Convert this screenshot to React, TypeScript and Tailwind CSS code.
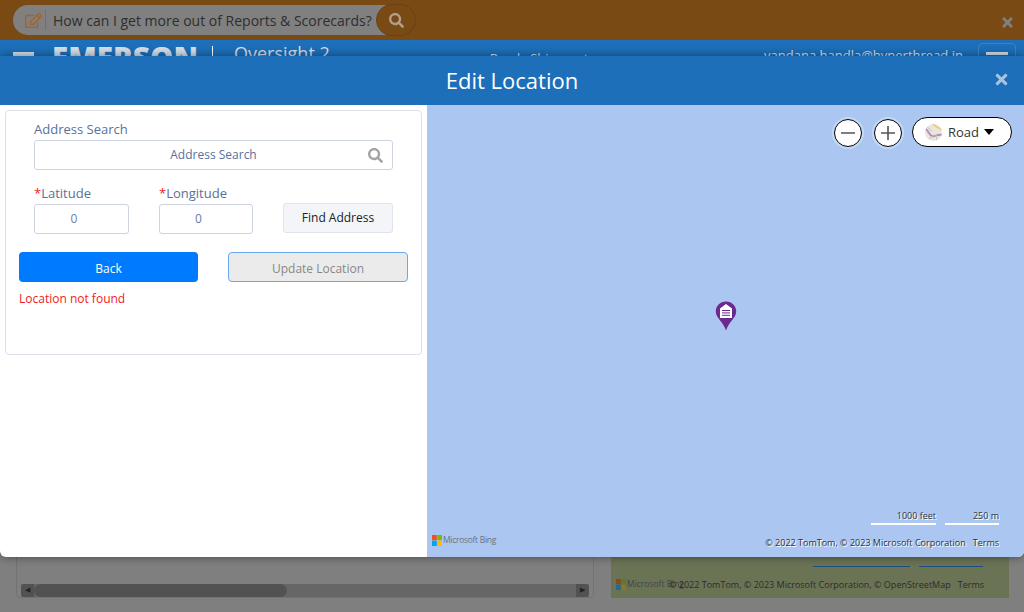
import { FaSearch, FaTimes, FaRegEdit } from 'react-icons/fa'

const font = { fontFamily: '"Open Sans", sans-serif' }

function PageBehind() {
  return (
    <div className="flex h-full flex-col">
      <div className="flex h-10 shrink-0 items-center justify-between bg-[#7a4a15] pl-[13px] pr-[9px]">
        <div className="flex items-center">
          <div className="flex h-[30px] w-[375px] items-center rounded-l-full bg-[#808080] pl-[12px]">
            <FaRegEdit size={17} className="shrink-0 text-[#a5622a]" />
            <div className="ml-[3px] h-5 w-px bg-[#a5622a]" />
            <span className="ml-[7px] whitespace-nowrap text-[14px] text-[#2e2e2e]">How can I get more out of Reports &amp; Scorecards?</span>
          </div>
          <div className="-ml-[12px] flex h-8 w-10 items-center justify-center rounded-full border border-[#6a4013] bg-[#7a4a15]">
            <FaSearch size={15} className="text-[#b09f8c]" />
          </div>
        </div>
        <FaTimes size={15} className="mt-[5px] text-[#808080]" />
      </div>

      <div className="flex h-6 shrink-0 items-start overflow-hidden bg-[#1c6fb8] pl-[13px] pr-[8px] text-[#d4dee8]">
        <div className="mt-[12px] h-[4px] w-[21px] shrink-0 bg-[#d4dee8]" />
        <span className="ml-[18px] mt-[-2px] text-[29.500px] font-extrabold leading-[40px]">EMERSON</span>
        <div className="ml-[14px] mt-[6px] h-6 w-px bg-white" />
        <span className="ml-[21px] mt-[1px] text-[18px] leading-6">Oversight 2</span>
        <span className="ml-[160px] mt-[10px] text-[13px] leading-4">Ready Shipment</span>
        <span className="ml-auto mt-[5px] text-[13px] leading-5">vandana.handla@hyperthread.in</span>
        <div className="ml-[15px] mt-[3px] flex h-10 w-[38px] justify-center rounded border border-[#3b83c4]">
          <div className="mt-[8px] h-[3px] w-[22px] bg-[#d4dee8]" />
        </div>
      </div>

      <div className="flex min-h-0 flex-1 gap-[17px] pl-[16px] pr-[15px] pb-[14px]">
        <div className="flex w-[578px] flex-col justify-end rounded border border-[#737373] px-[4px]">
          <div className="flex h-[13px] items-center bg-[#666666]">
            <div className="flex h-full w-[13px] items-center justify-center rounded-l bg-[#525252] text-[7px] text-[#222]">◀</div>
            <div className="h-full w-[253px] rounded-full bg-[#525252]" />
            <div className="ml-auto flex h-full w-[13px] items-center justify-center rounded-r bg-[#525252] text-[7px] text-[#222]">▶</div>
          </div>
        </div>
        <div className="flex w-[398px] flex-col justify-end bg-[#6b7355] pb-[7px] text-[9px] text-[#2c2c2c]">
          <div className="flex justify-end gap-[9px] pr-[26px]">
            <div className="h-px w-[97px] bg-[#1c4f80]" />
            <div className="h-px w-[64px] bg-[#1c4f80]" />
          </div>
          <div className="relative mt-[10px] flex h-[14px] items-center pl-[5px]">
            <MsLogo dim />
            <span className="ml-[1px] text-[8.500px] text-[#444]">Microsoft Bing</span>
            <div className="absolute right-[25px] top-[1px] flex gap-[7px] whitespace-nowrap text-[#2c2c2c]">
              <span>© 2022 TomTom, © 2023 Microsoft Corporation, © OpenStreetMap</span>
              <span>Terms</span>
            </div>
          </div>
        </div>
      </div>
    </div>
  )
}

function MsLogo({ dim = false }: { dim?: boolean }) {
  const c = dim ? ['#8a4a20', '#5f7a20', '#1f6a96', '#94761c'] : ['#f25022', '#7fba00', '#00a4ef', '#ffb900']
  return (
    <svg width="10" height="11" viewBox="0 0 10 11">
      <rect width="4.8" height="5.300" fill={c[0]} />
      <rect x="5.2" width="4.8" height="5.300" fill={c[1]} />
      <rect y="5.700" width="4.8" height="5.300" fill={c[2]} />
      <rect x="5.2" y="5.700" width="4.8" height="5.300" fill={c[3]} />
    </svg>
  )
}

function LocationForm() {
  return (
    <div className="w-[427px] shrink-0 pl-[5px] pr-[5px] pt-[5px]">
      <div className="h-[245px] rounded border border-[#dcdfeb] pl-[13px] pr-[13px]">
        <div className="pl-[15px] pr-[15px]">
          <label className="block pt-[9px] text-[13px] leading-[18px] text-[#5a6f9c]">Address Search</label>
          <div className="relative mt-[2px] flex h-[30px] w-[359px] items-center justify-center rounded-[3px] border border-[#ced3e0] text-[12px] text-[#5a6f9c]">
            Address Search
            <FaSearch size={15} className="absolute right-[9px] top-[7px] text-[#a3a3a3]" />
          </div>
          <div className="mt-[13px] flex w-[359px] items-end">
            <div className="w-[95px]">
              <label className="block pb-[1px] text-[13px] leading-[20px] text-[#5a6f9c]"><span className="text-[#f01c1c]">*</span>Latitude</label>
              <div className="flex h-[30px] items-center justify-center rounded-[3px] border border-[#ced3e0] pr-[15px] text-[12px] text-[#6a7da6]">0</div>
            </div>
            <div className="ml-[30px] w-[94px]">
              <label className="block pb-[1px] text-[13px] leading-[20px] text-[#5a6f9c]"><span className="text-[#f01c1c]">*</span>Longitude</label>
              <div className="flex h-[30px] items-center justify-center rounded-[3px] border border-[#ced3e0] pr-[15px] text-[12px] text-[#6a7da6]">0</div>
            </div>
            <button className="mb-[1px] ml-[30px] h-[30px] w-[110px] rounded-[3px] border border-[#e1e3ec] bg-[#f4f5f9] text-[12px] text-[#222]">Find Address</button>
          </div>
        </div>
        <div className="mt-[18px] flex justify-between">
          <button className="h-[30px] w-[179px] rounded-[4px] bg-[#007bff] pt-[3px] text-[12px] text-white">Back</button>
          <button className="h-[30px] w-[180px] rounded-[4px] border border-[#69a8ee] bg-[#ebebeb] pt-[3px] text-[12px] text-[#888]">Update Location</button>
        </div>
        <p className="mt-[8px] text-[12px] leading-[17px] text-[#f01c1c]">Location not found</p>
      </div>
    </div>
  )
}

function MapPane() {
  return (
    <div className="relative flex-1 bg-[#abc7f1]">
      <div className="absolute right-[12px] top-[12px] flex items-center">
        <button className="mt-[2px] flex h-7 w-7 items-center justify-center rounded-full border border-black bg-white ring-2 ring-white/30">
          <svg width="18" height="18" viewBox="0 0 18 18"><path d="M2 9h14" stroke="#555" strokeWidth="1.6" /></svg>
        </button>
        <button className="ml-[12px] mt-[2px] flex h-7 w-7 items-center justify-center rounded-full border border-black bg-white ring-2 ring-white/30">
          <svg width="18" height="18" viewBox="0 0 18 18"><path d="M2 9h14M9 2v14" stroke="#555" strokeWidth="1.6" /></svg>
        </button>
        <button className="ml-[10px] flex h-[30px] w-[100px] items-center rounded-full border border-black bg-white pl-[12px] pt-[2px] text-[13px] text-[#333]">
          <svg className="-mt-[2px]" width="17" height="17" viewBox="0 0 17 17">
            <clipPath id="globe"><circle cx="8.5" cy="8.5" r="8.500" /></clipPath>
            <g clipPath="url(#globe)">
              <rect width="17" height="17" fill="#ebe6da" />
              <path d="M0 5c3 0 4 6 7 7s5-2 10-1" stroke="#b48fcf" strokeWidth="2" fill="none" />
              <path d="M8 0c1 2 5 3 9 6" stroke="#efc57d" strokeWidth="1.6" fill="none" />
              <path d="M4 15l4-3M11 11l1 6M2 3l5 4" stroke="#c9c3b4" strokeWidth="1" fill="none" />
            </g>
          </svg>
          <span className="ml-[6px]">Road</span>
          <svg className="-mt-[2px] ml-[5px]" width="10" height="6" viewBox="0 0 10 6"><path d="M0 0h10L5 6z" fill="#000" /></svg>
        </button>
      </div>

      <svg className="absolute left-[288px] top-[196px]" width="22" height="30" viewBox="0 0 22 30">
        <path d="M11 0.5C5 0.5 0.8 5 0.8 10.5c0 6.500 7 9.500 10.200 19 3.200-9.500 10.200-12.500 10.200-19C21.200 5 17 0.500 11 0.500z" fill="#6b2a8e" />
        <path d="M11 3l6 4.500v9.500h-12v-9.500z" fill="#fff" />
        <path d="M7 9.500h8M7 11.900h8M7 14.300h8" stroke="#6b2a8e" strokeWidth="1" />
      </svg>

      <div className="absolute bottom-[32px] right-[25px] flex gap-[9px] text-[9px] leading-[14px] text-[#333] [text-shadow:1px_1px_0_#fff]">
        <div className="w-[65px] border-b-2 border-white text-right">1000 feet</div>
        <div className="w-[54px] border-b-2 border-white text-right">250 m</div>
      </div>

      <div className="absolute bottom-[10px] left-[5px] flex items-center">
        <MsLogo />
        <span className="ml-[1px] text-[8.500px] tracking-[-0.300px] text-[#6b7280]">Microsoft Bing</span>
      </div>

      <div className="absolute bottom-[8px] right-[25px] flex gap-[7px] whitespace-nowrap text-[9px] text-[#333] [text-shadow:1px_1px_0_#fff]">
        <span>© 2022 TomTom, © 2023 Microsoft Corporation</span>
        <span>Terms</span>
      </div>
    </div>
  )
}

export default function App() {
  return (
    <div className="relative h-[612px] w-[1024px] overflow-hidden bg-[#7f7f7f]" style={font}>
      <PageBehind />

      <div className="absolute inset-x-0 top-[56px] flex h-[501px] flex-col overflow-hidden rounded-b-md bg-white shadow-[0_0_10px_rgba(0,0,0,0.45)]">
        <div className="relative flex h-[49px] shrink-0 items-center justify-center bg-[#1c6fb8]">
          <h1 className="text-[22px] text-white">Edit Location</h1>
          <FaTimes size={17} className="absolute right-[14px] top-[15px] text-[#a6c4e2]" />
        </div>
        <div className="flex min-h-0 flex-1">
          <LocationForm />
          <MapPane />
        </div>
      </div>
    </div>
  )
}
